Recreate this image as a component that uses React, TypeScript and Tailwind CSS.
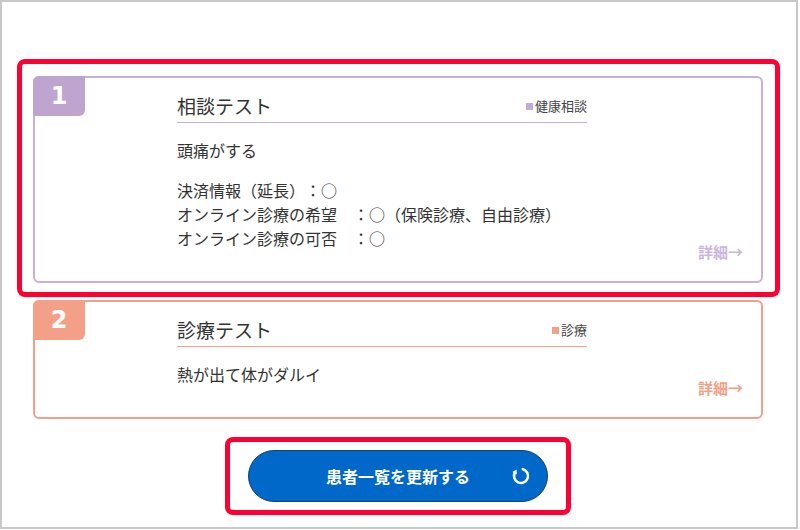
import { ReactNode } from "react";

type Consult = {
  no: number;
  title: string;
  category: string;
  body: string;
  details?: string[];
  accent: "purple" | "orange";
};

const consults: Consult[] = [
  {
    no: 1,
    title: "相談テスト",
    category: "健康相談",
    body: "頭痛がする",
    details: [
      "決済情報（延長）：○",
      "オンライン診療の希望　：○（保険診療、自由診療）",
      "オンライン診療の可否　：○",
    ],
    accent: "purple",
  },
  {
    no: 2,
    title: "診療テスト",
    category: "診療",
    body: "熱が出て体がダルイ",
    accent: "orange",
  },
];

const accents = {
  purple: {
    border: "border-[#c8b1d8]",
    badge: "bg-[#bfa4d0]",
    square: "bg-[#c4acd6]",
    link: "text-[#cbb6dd]",
  },
  orange: {
    border: "border-[#f4a088]",
    badge: "bg-[#f4a088]",
    square: "bg-[#f4a088]",
    link: "text-[#f4a088]",
  },
};

function RefreshIcon() {
  return (
    <svg width="20" height="20" viewBox="0 0 20 20" fill="none">
      <path
        d="M11.8 3.2 A7 7 0 1 1 3.9 6.5"
        stroke="white"
        strokeWidth="2.6"
        strokeLinecap="round"
      />
      <path d="M5.6 3.6 L1.3 5.9 L5.8 8.5 Z" fill="white" />
    </svg>
  );
}

function Highlight({ children, className }: { children: ReactNode; className?: string }) {
  return (
    <div className={`border-[5px] border-[#ff0033] rounded-[8px] ${className ?? ""}`}>
      {children}
    </div>
  );
}

function ConsultCard({ c }: { c: Consult }) {
  const a = accents[c.accent];
  return (
    <div className={`border-2 ${a.border} rounded-[6px] bg-white flex flex-col`}>
      <div className="flex">
        <div
          className={`${a.badge} -mt-[2px] -ml-[2px] w-[52px] h-[40px] rounded-tl-[6px] rounded-br-[6px] flex items-center justify-center text-white text-[24px] font-bold font-['DejaVu_Sans',sans-serif] shrink-0`}
        >
          {c.no}
        </div>
        <div className="ml-[92px] w-[410px] pt-[14px]">
          <div className={`flex items-center justify-between border-b ${a.border} pb-[2px]`}>
            <span className="text-[19px] leading-[28px] text-[#333]">{c.title}</span>
            <span className="flex items-center text-[13px] leading-[18px] text-[#444]">
              <span className={`w-[7px] h-[7px] ${a.square} mr-[2px]`}></span>
              {c.category}
            </span>
          </div>
          <div className="mt-[15px] text-[16px] leading-[24px] text-[#333] [text-spacing-trim:space-all]">
            <p>{c.body}</p>
            {c.details && (
              <div className="mt-[16px]">
                {c.details.map((d) => (
                  <p key={d}>{d}</p>
                ))}
              </div>
            )}
          </div>
        </div>
      </div>
      <div className="flex justify-end -mt-[8px] pr-[18px] pb-[19px]">
        <a className={`${a.link} font-bold text-[15px] leading-[20px]`}>詳細→</a>
      </div>
    </div>
  );
}

export default function App() {
  return (
    <div className="w-[798px] h-[529px] border-2 border-[#c8c8c8] bg-white font-['Noto_Sans_CJK_JP',sans-serif] overflow-hidden">
      <div className="flex flex-col pt-[57px] pl-[31px] pr-[33px]">
        <Highlight className="-ml-[16px] -mr-[17px] pl-[11px] pr-[12px] pt-[12px] pb-[9px]">
          <ConsultCard c={consults[0]} />
        </Highlight>
        <div className="mt-[3px]">
          <ConsultCard c={consults[1]} />
        </div>
        <Highlight className="self-center mt-[18px] px-[18px] py-[8px]">
          <button className="relative w-[300px] h-[52px] rounded-full bg-[#0068c9] border border-[#17406f] flex items-center justify-center text-white font-bold text-[16px]">
            患者一覧を更新する
            <span className="absolute right-[16px] top-[15px]">
              <RefreshIcon />
            </span>
          </button>
        </Highlight>
      </div>
    </div>
  );
}
